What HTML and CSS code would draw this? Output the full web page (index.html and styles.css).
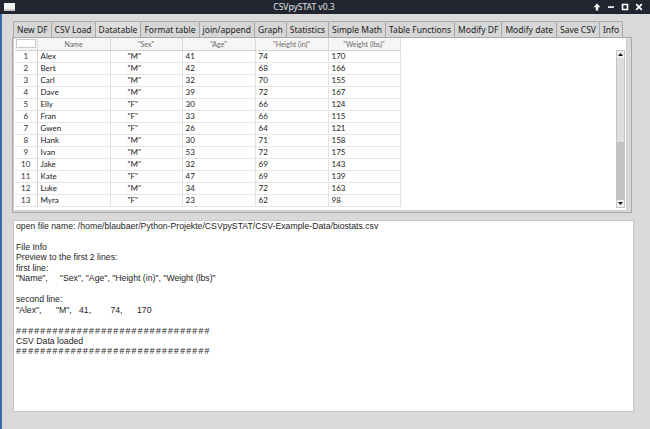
FILE: index.html
```html
<!DOCTYPE html>
<html lang="en">

<head>
  <meta charset="UTF-8" />
  <title>CSVpySTAT v0.3</title>
  <link rel="stylesheet" href="styles.css">
</head>

<body>
  <div class="titlebar">
    <span class="win-icon"></span>
    <span class="title">CSVpySTAT v0.3</span>
    <span class="controls">
      <svg width="8" height="8" viewBox="0 0 8 8"><path d="M4 0.5 L7.5 4.2 H5.2 V7.5 H2.8 V4.2 H0.5 Z" fill="#fff" /></svg>
      <svg width="8" height="8" viewBox="0 0 8 8"><rect x="1" y="3.3" width="6" height="1.6" fill="#fff" /></svg>
      <svg width="8" height="8" viewBox="0 0 8 8"><rect x="1.5" y="1.5" width="5" height="5" fill="none" stroke="#fff" stroke-width="1.6" /></svg>
      <svg width="8" height="8" viewBox="0 0 8 8"><path d="M1.2 1.2 L6.8 6.8 M6.8 1.2 L1.2 6.8" stroke="#fff" stroke-width="1.7" /></svg>
    </span>
  </div>

  <div class="window">
    <div class="edge"></div>
    <div class="main">
      <div class="tabs">
        <div class="tab">New DF</div>
        <div class="tab">CSV Load</div>
        <div class="tab active">Datatable</div>
        <div class="tab">Format table</div>
        <div class="tab">join/append</div>
        <div class="tab">Graph</div>
        <div class="tab">Statistics</div>
        <div class="tab">Simple Math</div>
        <div class="tab">Table Functions</div>
        <div class="tab">Modify DF</div>
        <div class="tab">Modify date</div>
        <div class="tab">Save CSV</div>
        <div class="tab">Info</div>
      </div>

      <div class="pane">
        <div class="tableview">
          <div class="grid">
            <table>
              <colgroup>
                <col style="width:22px">
                <col style="width:73px">
                <col style="width:72px">
                <col style="width:73px">
                <col style="width:73px">
                <col style="width:72px">
              </colgroup>
              <thead>
                <tr>
                  <th class="corner"><span></span></th>
                  <th>Name</th>
                  <th>"Sex"</th>
                  <th>"Age"</th>
                  <th>"Height (in)"</th>
                  <th>"Weight (lbs)"</th>
                </tr>
              </thead>
              <tbody>
                <tr><td class="num">1</td><td>Alex</td><td class="sex">"M"</td><td>41</td><td>74</td><td>170</td></tr>
                <tr><td class="num">2</td><td>Bert</td><td class="sex">"M"</td><td>42</td><td>68</td><td>166</td></tr>
                <tr><td class="num">3</td><td>Carl</td><td class="sex">"M"</td><td>32</td><td>70</td><td>155</td></tr>
                <tr><td class="num">4</td><td>Dave</td><td class="sex">"M"</td><td>39</td><td>72</td><td>167</td></tr>
                <tr><td class="num">5</td><td>Elly</td><td class="sex">"F"</td><td>30</td><td>66</td><td>124</td></tr>
                <tr><td class="num">6</td><td>Fran</td><td class="sex">"F"</td><td>33</td><td>66</td><td>115</td></tr>
                <tr><td class="num">7</td><td>Gwen</td><td class="sex">"F"</td><td>26</td><td>64</td><td>121</td></tr>
                <tr><td class="num">8</td><td>Hank</td><td class="sex">"M"</td><td>30</td><td>71</td><td>158</td></tr>
                <tr><td class="num">9</td><td>Ivan</td><td class="sex">"M"</td><td>53</td><td>72</td><td>175</td></tr>
                <tr><td class="num">10</td><td>Jake</td><td class="sex">"M"</td><td>32</td><td>69</td><td>143</td></tr>
                <tr><td class="num">11</td><td>Kate</td><td class="sex">"F"</td><td>47</td><td>69</td><td>139</td></tr>
                <tr><td class="num">12</td><td>Luke</td><td class="sex">"M"</td><td>34</td><td>72</td><td>163</td></tr>
                <tr><td class="num">13</td><td>Myra</td><td class="sex">"F"</td><td>23</td><td>62</td><td>98</td></tr>
              </tbody>
            </table>
          </div>
          <div class="vscroll">
            <div class="sb-btn">
              <svg width="7" height="5" viewBox="0 0 7 5"><path d="M3.5 1 L6 4 H1 Z" fill="#111" /></svg>
            </div>
            <div class="sb-track"></div>
            <div class="sb-handle"></div>
            <div class="sb-btn">
              <svg width="7" height="5" viewBox="0 0 7 5"><path d="M1 1 H6 L3.5 4 Z" fill="#111" /></svg>
            </div>
          </div>
        </div>
      </div>

      <div class="output">open file name: /home/blaubaer/Python-Projekte/CSVpySTAT/CSV-Example-Data/biostats.csv

File Info
Preview to the first 2 lines:
first line:
"Name",     "Sex", "Age", "Height (in)", "Weight (lbs)"

second line:
"Alex",      "M",   41,        74,      170

<span class="rule">################################</span>
CSV Data loaded
<span class="rule">################################</span></div>
    </div>
  </div>
</body>

</html>
```

FILE: styles.css
```css
* {
  box-sizing: border-box;
}

body,
html {
  margin: 0;
  padding: 0;
}

body {
  width: 650px;
  height: 429px;
  overflow: hidden;
  background: #d9d9d9;
  font-family: 'Noto Sans', sans-serif;
  color: #222;
}

/* window title bar */
.titlebar {
  height: 14px;
  background: #20252f;
  display: flex;
  align-items: center;
  color: #e6e6e6;
}

.win-icon {
  width: 11px;
  height: 8px;
  margin-left: 4px;
  background: #f4f4f4;
  border-bottom: 2px solid #c9c9c9;
}

.title {
  flex: 1;
  text-align: center;
  font-size: 8.5px;
  line-height: 14px;
}

.controls {
  display: flex;
  gap: 6px;
  padding-right: 7px;
}

.controls svg {
  display: block;
}

.window {
  display: flex;
  height: 415px;
}

.edge {
  width: 2px;
  background: #3a6bb0;
}

.main {
  flex: 1;
  padding: 7px 16px 0 10px;
  display: flex;
  flex-direction: column;
}

/* tab bar */
.tabs {
  display: flex;
  margin-left: 1px;
  height: 16px;
}

.tab {
  height: 16px;
  padding: 0 3px;
  margin-right: -1px;
  border: 1px solid #a9a9a9;
  border-bottom: none;
  border-radius: 2px 2px 0 0;
  background: #d6d6d6;
  font-size: 8.5px;
  line-height: 15px;
  white-space: nowrap;
}

.tab.active {
  background: #dedede;
}

.pane {
  width: 620px;
  height: 176px;
  border: 1px solid #a9a9a9;
  padding: 0 4px 1px 0;
  display: flex;
}

.tableview {
  flex: 1;
  background: #fff;
  border-left: 1px solid #cdcdcd;
  border-bottom: 1px solid #cdcdcd;
  border-right: 1px solid #cdcdcd;
  display: flex;
  padding-left: 1px;
}

.grid {
  flex: 1;
}

table {
  border-collapse: collapse;
  table-layout: fixed;
  width: 385px;
  font-family: Lato, sans-serif;
  font-size: 8px;
}

th {
  height: 12px;
  padding: 0;
  font-weight: normal;
  font-size: 7px;
  color: #666;
  background: #f6f6f6;
  border-right: 1px solid #dcdcdc;
  border-bottom: 1px solid #d2d2d2;
  text-align: center;
}

th.corner {
  padding: 1px;
}

th.corner span {
  display: block;
  height: 9px;
  background: #fff;
  border: 1px solid #c9c9c9;
}

td {
  height: 12px;
  padding: 0 0 0 3px;
  line-height: 11px;
  color: #222;
  border-right: 1px solid #e2e2e2;
  border-bottom: 1px solid #e6e6e6;
  white-space: nowrap;
}

td.num {
  padding: 0;
  text-align: center;
  color: #333;
  border-right: 1px solid #d2d2d2;
}

td.sex {
  padding-left: 17px;
}

/* vertical scrollbar */
.vscroll {
  width: 9px;
  margin: 12px 1px 2px 0;
  display: flex;
  flex-direction: column;
  background: #dcdcdc;
  border: 1px solid #c4c4c4;
}

.sb-btn {
  height: 7px;
  display: flex;
  align-items: center;
  justify-content: center;
  background: #f2f2f2;
}

.sb-btn svg {
  display: block;
}

.sb-track {
  flex: 1;
  background: #dedede;
}

.sb-handle {
  height: 58px;
  background: #c2c2c2;
}

/* log output */
.output {
  margin: 7px 0 0 1px;
  height: 192px;
  background: #fff;
  border: 1px solid #c6c6c6;
  padding: 0 2px;
  font-family: 'Liberation Sans', Arial, sans-serif;
  font-size: 8.7px;
  line-height: 10.45px;
  white-space: pre;
  color: #1c1c1c;
}

.rule {
  letter-spacing: 1.25px;
}
```
